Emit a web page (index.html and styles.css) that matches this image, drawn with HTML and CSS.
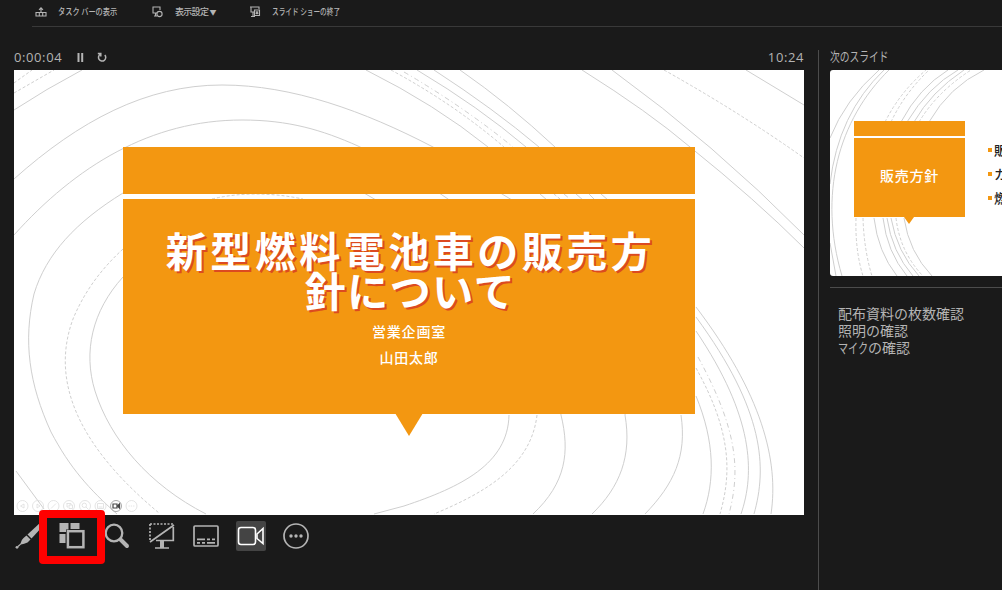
FILE: index.html
```html
<!DOCTYPE html>
<html lang="ja">
<head>
    <meta charset="UTF-8">
    <meta name="viewport" content="width=device-width, initial-scale=1.0">
    <title>発表者ツール</title>
    <link rel="stylesheet" href="styles.css">
</head>
<body>
    <nav class="menu">
        <div class="item">
            <svg width="12" height="10" viewBox="0 0 12 10"><path d="M1 9V5.500H11V9ZM6 5V1M4 2.800L6 .8L8 2.800M4.300 5.500V9M7.700 5.500V9"/></svg>
            <span class="taskbar">タスク バーの表示</span>
        </div>
        <div class="item">
            <svg width="12" height="12" viewBox="0 0 12 12"><path d="M5 7H1V1H8V4M2 10H5M3.500 7V10"/><circle cx="7.500" cy="8" r="2.600"/></svg>
            <span class="config">表示設定 <small>▼</small></span>
        </div>
        <div class="item">
            <svg class="exit" width="12" height="12" viewBox="0 0 12 12"><path d="M1 1H10V3M2 1V6H5M4 6V10M2 10.500H6M5.500 4H10.500V9.500H5.500ZM6.800 5.500L9.200 8M9.200 5.500L6.800 8"/></svg>
            <span class="end">スライド ショーの終了</span>
        </div>
    </nav>
    <div class="main">
        <section class="current">
            <div class="status">
                <span class="time">0:00:04</span>
                <svg class="pause" width="7" height="9" viewBox="0 0 7 9"><path d="M1.500 0V9M5.200 0V9"/></svg>
                <svg class="reset" width="10" height="10" viewBox="0 0 10 10"><path d="M3.500 2.200A3.600 3.600 0 1 0 7.800 3M.8 1.600H3.800V4.600"/></svg>
                <span class="clock">10:24</span>
            </div>
            <div class="slide">
                <svg class="lines" width="790" height="445" viewBox="0 1 790 445">
                    <path d="M0 41Q32 20 68 1"/>
                    <path d="M0 110C65 52 132 16 208 16C278 16 350 42 419 78Q455 100 488 125L498 131C580 195 625 270 611 346"/>
                    <path d="M0 166C62 97 137 51 228 51C275 51 308 61 344 77Q392 100 434 130C510 190 542 270 547 346"/>
                    <path d="M109 124C62 153 32 185 20 225C9 272 15 315 37 363C56 399 75 420 103 445"/>
                    <path d="M350 124L362 131M109 208C78 242 69 283 81 322C96 370 135 416 192 445"/>
                    <path class="dash" d="M198 130Q240 120 289 130M109 180C84 203 69 226 59 250C35 315 68 380 145 444"/>
                    <path d="M2 402L30 440"/>
                    <path class="dash" d="M0 14L18 1M0 24L40 1M377 1Q440 35 490 78M540 125L546 130"/>
                    <path class="dashdot" d="M390 3Q450 38 499 78M550 125L556 130"/>
                    <path d="M352 1Q422 36 474 78M526 125L533 131M403 1Q465 38 512 78M562 125L569 131M420 1Q480 40 525 78M575 125L581 131M446 1Q495 35 541 78M587 125L594 131"/>
                    <path d="M568 1Q635 43 676 78Q742 131 790 179M598 1Q700 75 790 166M732 1L790 36"/>
                    <path class="dash" d="M650 1Q725 43 790 89"/>
                    <path d="M495 346C494 395 447 418 390 437L360 445"/>
                    <path class="dash" d="M523 346C517 398 470 424 420 445"/>
                    <path d="M547 346C556 383 552 414 519 445M611 346C618 387 606 418 578 445M667 346C673 387 660 415 631 445M682 327C701 373 701 412 689 445"/>
                    <path class="dash" d="M682 299C717 362 718 403 706 445"/>
                    <path class="dashdot" d="M684 288C725 363 726 403 715 445"/>
                    <path d="M682 262C740 348 741 404 727 445M682 248C751 342 753 399 740 445M682 238C748 325 765 392 757 445"/>
                </svg>
                <div class="band"></div>
                <div class="card">
                    <h1>新型燃料電池車の販売方<br><span class="second">針について</span></h1>
                    <p>営業企画室</p>
                    <p>山田太郎</p>
                </div>
                <svg class="mini" width="130" height="14" viewBox="0 0 130 14">
                    <g class="faint">
                        <circle cx="8.500" cy="7" r="5.500"/><path d="M10 5V9L6.500 7Z"/>
                        <circle cx="24" cy="7" r="5.500"/><path d="M23 5V9L26 7Z"/>
                        <circle cx="39.500" cy="7" r="5.500"/><path d="M37 9.500L42 4.500"/>
                        <circle cx="55" cy="7" r="5.500"/><path d="M52.500 4.500H57V6M53 4.500V8H54M55 6H58.500V9.500H55Z"/>
                        <circle cx="71" cy="7" r="5.500"/><circle cx="70.300" cy="6.300" r="2.200"/><path d="M72 8L74 10"/>
                        <circle cx="86.500" cy="7" r="5.500"/><path d="M83.500 4.500H89.500V9.500H83.500ZM84.500 8H88.500"/>
                        <circle cx="117.500" cy="7" r="5.500"/><path d="M114.500 7H120.500" stroke-dasharray="1.300 1"/>
                    </g>
                    <g class="strong"><circle class="ring" cx="102" cy="7" r="5.500"/><path d="M99 5H103V9H99Z"/><path d="M103.500 7L105.500 5V9Z" fill="#444"/></g>
                </svg>
            </div>
            <div class="tools">
                <svg class="tool" width="30" height="30" viewBox="0 0 30 30"><g class="fill"><path d="M28 1L31 4L18.500 17.500L14.500 13.500Z"/><path d="M13.500 14.500L17.500 18.500L14.500 21.500Q11 23 8 23.500L5.500 26L4.500 25L7.500 22.500Q8.500 18.500 10.500 17Z"/><circle cx="4" cy="26.300" r="1.400"/></g></svg>
                <svg class="tool" width="30" height="30" viewBox="0 0 30 30"><g class="fill"><path d="M1.500 2H10.500V8.500H8V11H1.500ZM12.500 2H21.500V8H12.500ZM1.500 13H7.500V22H1.500Z"/></g><rect class="thick" x="9.900" y="10.200" width="15.500" height="16"/></svg>
                <svg class="tool" width="30" height="30" viewBox="0 0 30 30"><circle class="glass" cx="12" cy="12" r="8.300"/><path class="handle" d="M18.500 18.500L25 25"/></svg>
                <svg class="tool" width="30" height="30" viewBox="0 0 30 30"><path class="medium" d="M3 3H26M3 3V19" stroke-dasharray="2 1.500"/><path class="medium" d="M3 21L27 4M26.300 6V19.500H9M8 27H22"/><path class="stand" d="M15 19V27"/></svg>
                <svg class="tool" width="30" height="30" viewBox="0 0 30 30"><rect class="medium" x="3" y="5" width="24" height="20" rx="1"/><path class="medium" d="M6 18.300H14M16 18.300H19M21 18.300H24M6 21.800H9M11 21.800H14M16 21.800H24"/></svg>
                <svg class="tool camera" width="30" height="30" viewBox="0 0 30 30"><rect x="2.500" y="6.500" width="17" height="17" rx="2.500"/><path d="M21 13L27 7.500V22.500L21 17.500Z"/></svg>
                <svg class="tool" width="30" height="30" viewBox="0 0 30 30"><circle class="medium" cx="15" cy="15" r="12"/><g class="fill"><circle cx="10" cy="15" r="1.700"/><circle cx="15" cy="15" r="1.700"/><circle cx="20" cy="15" r="1.700"/></g></svg>
                <div class="marker"></div>
            </div>
        </section>
        <aside class="side">
            <h2>次のスライド</h2>
            <div class="next">
                <svg class="lines" width="172" height="206" viewBox="0 0 172 206">
                    <path d="M0 68Q15 30 49 0M0 114Q8 44 54 0M59 0C8 50 -12 125 12 206M0 173L6 206"/>
                    <path class="dash" d="M55 52Q70 22 96 0M61 52Q74 24 99 0M26 148Q25 180 33 206M33 148Q34 180 42 206"/>
                    <path d="M71 52Q89 18 118 0M77 52Q98 17 128 0M84 52Q101 22 134 0M99 52Q119 17 154 0"/>
                    <path d="M44 148Q48 182 67 206M53 148Q57 182 77 206M57 148Q62 182 83 206M61 148Q67 182 89 206M74 148Q79 182 102 206"/>
                    <path class="dash" d="M89 52Q107 22 141 0M66 148Q70 182 93 206"/>
                </svg>
                <div class="next-band"></div>
                <div class="next-card">販売方針</div>
                <ul>
                    <li>販</li>
                    <li>カ</li>
                    <li>燃</li>
                </ul>
            </div>
            <div class="notes">
                <p>配布資料の枚数確認</p>
                <p>照明の確認</p>
                <p><span class="mic">マイク</span>の確認</p>
            </div>
        </aside>
    </div>
</body>
</html>
```
FILE: styles.css
```css
* {
    box-sizing: border-box;
}
body {
    margin: 0;
    width: 1002px;
    height: 590px;
    overflow: hidden;
    background-color: #1a1a1a;
    color: #b4b4b4;
    font-family: "Noto Sans CJK JP", sans-serif;
}
h1, h2, p, ul {
    margin: 0;
    padding: 0;
    font-weight: normal;
}
svg {
    display: block;
    flex: none;
    fill: none;
    stroke: #b4b4b4;
    stroke-width: 1.1;
}
span {
    white-space: nowrap;
}
.menu {
    display: flex;
    gap: 35px;
    height: 27px;
    margin-left: 32px;
    padding: 0 0 3px 3px;
    border-bottom: 1px solid #393939;
    font-size: 9px;
    font-weight: 500;
    line-height: 24px;
}
.item {
    display: flex;
    align-items: center;
    gap: 11px;
}
.taskbar {
    width: 59px;
    transform: scaleX(0.8);
    transform-origin: left;
}
.config {
    width: 40px;
    letter-spacing: -0.7px;
}
.config small {
    font-size: 7px;
}
.exit {
    margin-left: -1px;
}
.end {
    width: 80px;
    transform: scaleX(0.74);
    transform-origin: left;
}
.main {
    display: flex;
    height: 563px;
}
.current {
    flex: none;
    width: 818px;
    padding: 20px 14px 0;
}
.status {
    display: flex;
    align-items: center;
    height: 23px;
    padding-bottom: 3px;
    font-family: "Open Sans", sans-serif;
    font-size: 13px;
    letter-spacing: 0.6px;
}
.time {
    width: 63px;
}
.pause {
    stroke-width: 2;
}
.reset {
    margin-left: 13px;
    stroke-width: 1.5;
}
.clock {
    margin-left: auto;
}
.slide {
    position: relative;
    height: 445px;
    padding: 77px 109px 0;
    background-color: #fff;
}
.lines {
    position: absolute;
    top: 0;
    left: 0;
    stroke: #cfcfcf;
    stroke-width: 1;
}
.dash {
    stroke-dasharray: 3 2;
}
.dashdot {
    stroke-dasharray: 5 3 1 3;
}
.band {
    position: relative;
    height: 47px;
    margin-bottom: 5px;
    background-color: #f39711;
}
.card {
    position: relative;
    height: 215px;
    padding-top: 30px;
    background-color: #f39711;
    color: #fff;
    text-align: center;
}
.card::after {
    content: "";
    position: absolute;
    top: 214px;
    left: 272px;
    border: solid transparent;
    border-width: 23px 14px 0;
    border-top-color: #f39711;
}
.card h1 {
    margin-bottom: 9px;
    padding-left: 3px;
    font-size: 41px;
    font-weight: 700;
    line-height: 40px;
    letter-spacing: 3.5px;
    text-shadow: 2px 2px 0 #dc4a20;
}
.second {
    letter-spacing: 1.5px;
}
.card p {
    font-size: 14px;
    font-weight: 500;
    line-height: 26px;
    letter-spacing: 0.8px;
}
.mini {
    position: absolute;
    left: 0;
    bottom: 2px;
}
.faint {
    stroke: #ddd;
    stroke-width: 0.8;
}
.strong {
    stroke: #444;
    stroke-width: 1.2;
}
.ring {
    stroke: #aaa;
    stroke-width: 1;
}
.tools {
    position: relative;
    display: flex;
    gap: 14.6px;
    padding-top: 6px;
    margin-left: -1px;
}
.tool {
    stroke-width: 1.2;
}
.fill {
    fill: #b4b4b4;
    stroke: none;
}
.medium {
    stroke-width: 1.7;
}
.thick {
    stroke-width: 2.5;
}
.glass {
    stroke-width: 2.3;
}
.stand {
    stroke-width: 4;
}
.handle {
    stroke-width: 4;
    stroke-linecap: round;
}
.camera {
    border-radius: 2px;
    background-color: #444;
    stroke: #fff;
    stroke-width: 1.6;
}
.marker {
    position: absolute;
    top: -5px;
    left: 26px;
    width: 66px;
    height: 54px;
    border: 8px solid #f00;
    border-radius: 4px;
}
.side {
    flex: 1;
    min-width: 0;
    margin-top: 23px;
    padding-left: 11px;
    border-left: 1px solid #4c4c4c;
}
.side h2 {
    width: 80px;
    height: 20px;
    font-size: 13px;
    line-height: 11px;
    white-space: nowrap;
    transform: scaleX(0.75);
    transform-origin: left;
}
.next {
    position: relative;
    height: 206px;
    padding: 51px 0 0 24px;
    overflow: hidden;
    border-radius: 3px 0 0 3px;
    background-color: #fff;
}
.next-band {
    position: relative;
    width: 111px;
    height: 15px;
    margin-bottom: 2px;
    background-color: #f39711;
}
.next-card {
    position: relative;
    width: 111px;
    height: 79px;
    background-color: #f39711;
    color: #fff;
    font-size: 14px;
    font-weight: 500;
    line-height: 74px;
    letter-spacing: 0.8px;
    text-align: center;
}
.next-card::after {
    content: "";
    position: absolute;
    top: 79px;
    left: 50px;
    border: solid transparent;
    border-width: 7px 5px 0;
    border-top-color: #f39711;
}
.next ul {
    position: absolute;
    top: 68px;
    left: 158px;
    color: #222;
    font-size: 13px;
    font-weight: 500;
    line-height: 24px;
    list-style: none;
}
.next li {
    display: flex;
    align-items: center;
    gap: 2px;
}
.next li::before {
    content: "";
    width: 4px;
    height: 4px;
    background-color: #f39711;
}
.notes {
    margin-top: 11px;
    padding: 17px 0 0 8px;
    border-top: 1px solid #4c4c4c;
    font-size: 14px;
    line-height: 17px;
}
.mic {
    display: inline-block;
    width: 42px;
    margin-right: -12px;
    transform: scaleX(0.72);
    transform-origin: left;
}
```
